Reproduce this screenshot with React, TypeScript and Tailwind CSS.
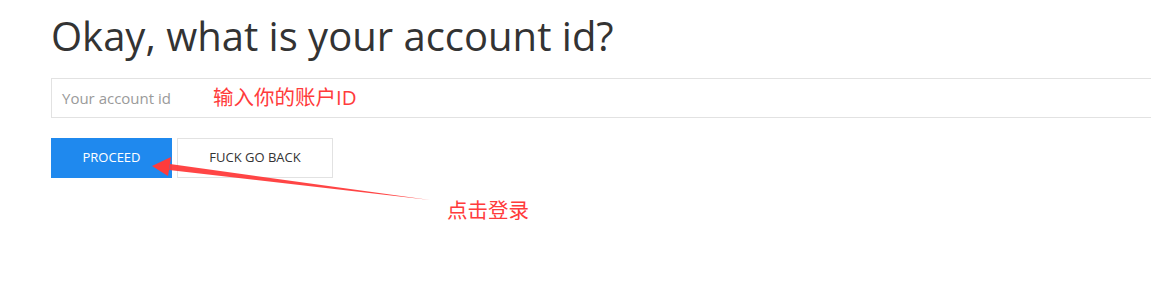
import React from "react";

const Arrow = () => (
  <svg
    className="absolute left-0 top-0 pointer-events-none"
    width="1151"
    height="282"
    viewBox="0 0 1151 282"
  >
    <polygon points="430,200 170,164 169,170" fill="#ff3b3b" opacity="0.95" />
    <polygon points="152,166 171,157 168,176" fill="#ff3b3b" />
  </svg>
);

const App = () => {
  return (
    <div
      className="relative w-[1151px] h-[282px] overflow-hidden bg-white"
      style={{ fontFamily: '"Open Sans", "Noto Sans CJK SC", sans-serif' }}
    >
      <div className="pl-[51px] pt-[9px]">
        <h1 className="text-[40px] leading-[53px] text-[#333333]">
          Okay, what is your account id?
        </h1>
        <div className="mt-[16px] h-[40px] w-[1110px] border border-[#e2e2e2] flex items-center pl-[10px]">
          <span className="text-[15px] text-[#9a9a9a]">Your account id</span>
        </div>
        <div className="mt-[20px] flex gap-[5px]">
          <button className="w-[121px] h-[40px] bg-[#1f89ee] text-white text-[13px]">
            PROCEED
          </button>
          <button className="w-[156px] h-[40px] border border-[#e2e2e2] text-[#333333] text-[13px]">
            FUCK GO BACK
          </button>
        </div>
      </div>
      <span className="absolute left-[213px] top-[84px] text-[20.5px] leading-[26px] text-[#ff3b3b]">
        输入你的账户ID
      </span>
      <span className="absolute left-[447px] top-[197px] text-[20.5px] leading-[26px] text-[#ff3b3b]">
        点击登录
      </span>
      <Arrow />
    </div>
  );
};

export default App;
